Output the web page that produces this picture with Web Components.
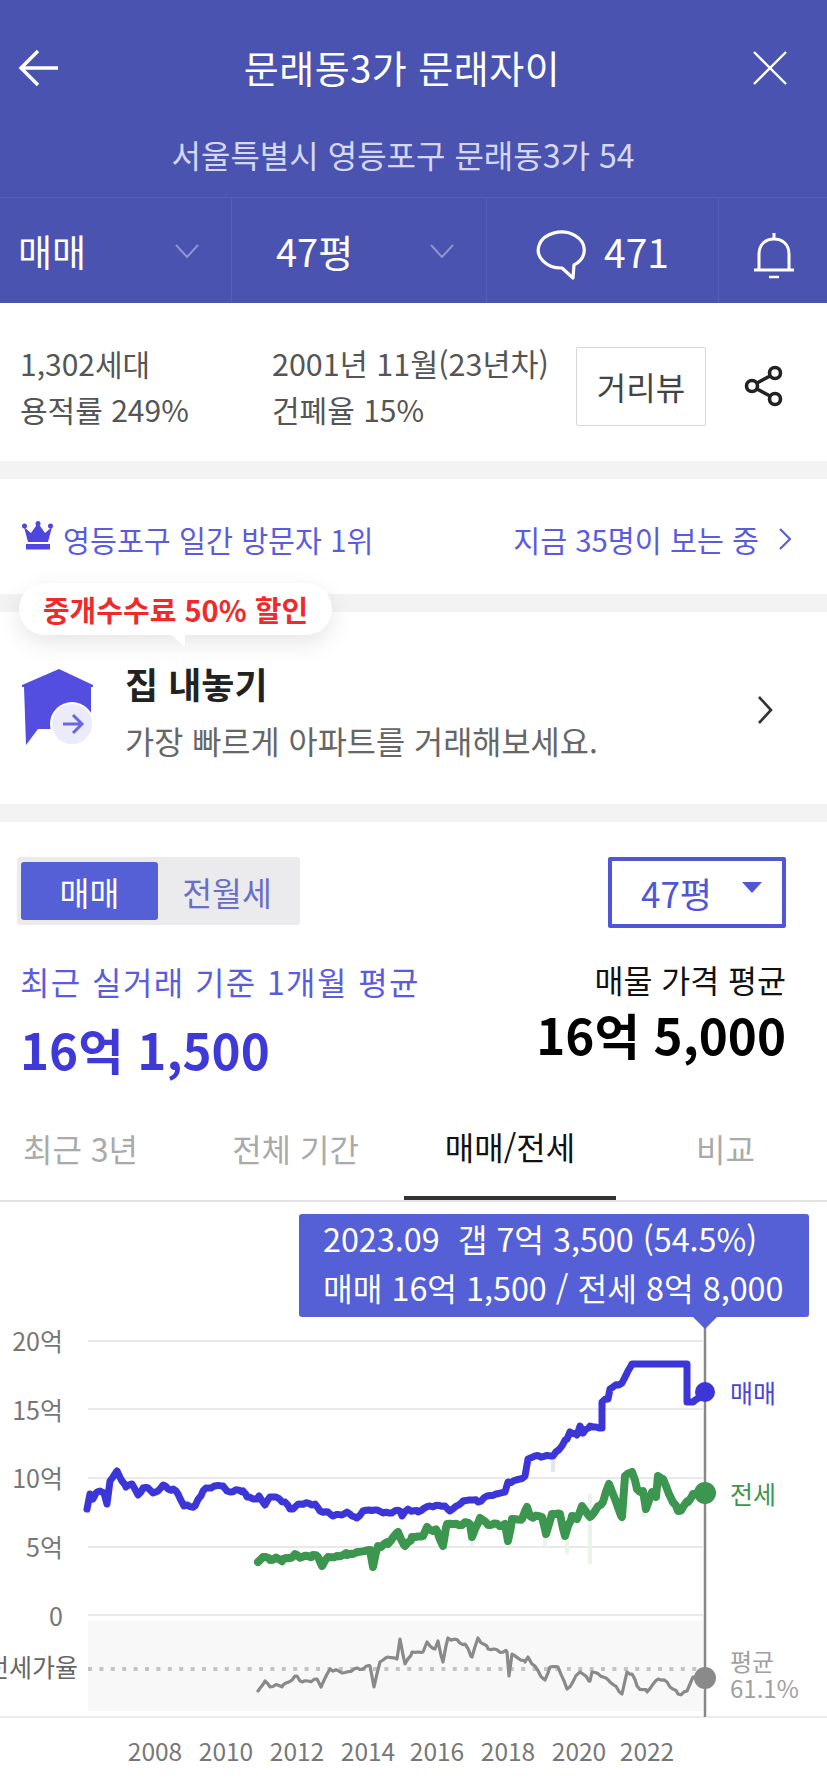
<!DOCTYPE html>
<html lang="ko">
<head>
<meta charset="utf-8">
<title>문래동3가 문래자이</title>
<style>
  html, body { margin: 0; padding: 0; background: #fff; }
  body { width: 827px; height: 1785px; overflow: hidden; font-family: "Noto Sans CJK KR", "Noto Sans", sans-serif; }
  page-band { display: block; }
</style>
</head>
<body>
<apt-header>
  <span slot="title">문래동3가 문래자이</span>
  <span slot="address">서울특별시 영등포구 문래동3가 54</span>
</apt-header>
<apt-info></apt-info>
<page-band></page-band>
<visitor-row></visitor-row>
<page-band></page-band>
<sell-card></sell-card>
<page-band></page-band>
<price-panel></price-panel>
<range-tabs></range-tabs>
<price-chart></price-chart>

<script>
function register(name, html) {
    const tpl = document.createElement('template');
    tpl.innerHTML = html;
    customElements.define(name, class extends HTMLElement {
        constructor() {
            super();
            this.attachShadow({ mode: 'open' });
            this.shadowRoot.appendChild(tpl.content.cloneNode(true));
        }
    });
}

register('page-band', `
    <style>:host { display: block; height: 18px; background: #f3f3f3; }</style>
`);

register('apt-header', `
    <style>
        :host { display: block; height: 303px; background: #4b53b0; color: #fff; }
        .top { height: 136px; box-sizing: border-box; display: flex; align-items: center; justify-content: space-between; padding: 0 40px 0 18px; }
        .top svg { display: block; }
        .title { font-size: 38px; letter-spacing: 0.5px; padding: 0 9px 4px 0; }
        .addr { height: 40px; line-height: 36px; text-align: center; font-size: 32px; color: #d5d8f2; padding-right: 21px; }
        .bar { margin-top: 21px; height: 106px; display: grid; grid-template-columns: 231px 255px 232px 109px; border-top: 1px solid #565eb8; box-sizing: border-box; }
        .cell { display: flex; align-items: center; border-left: 1px solid #565eb8; font-size: 37px; position: relative; }
        .cell:first-child { border-left: 0; padding-left: 18px; }
        .pick { justify-content: space-between; padding-right: 32px; }
        .cell.size { padding-left: 44px; font-size: 38px; }
        .talk { padding-left: 48px; gap: 17px; font-size: 39px; }
        .talk svg { margin-top: 8px; }
        .bell { justify-content: center; padding: 10px 0 0 2px; }
    </style>
    <div class="top">
        <svg width="42" height="38" viewBox="0 0 42 38" fill="none" stroke="#fff" stroke-width="3.4"><path d="M40 19H3M20 2 3 19l17 17"/></svg>
        <div class="title"><slot name="title"></slot></div>
        <svg width="34" height="34" viewBox="0 0 34 34" fill="none" stroke="#fff" stroke-width="2.4"><path d="M1 1l32 32M33 1 1 33"/></svg>
    </div>
    <div class="addr"><slot name="address"></slot></div>
    <div class="bar">
        <div class="cell pick"><span>매매</span>
            <svg width="24" height="14" viewBox="0 0 24 14" fill="none" stroke="#8e94d0" stroke-width="2"><path d="M1 1l11 12L23 1"/></svg></div>
        <div class="cell pick size"><span>47평</span>
            <svg width="24" height="14" viewBox="0 0 24 14" fill="none" stroke="#8e94d0" stroke-width="2"><path d="M1 1l11 12L23 1"/></svg></div>
        <div class="cell talk">
            <svg width="52" height="50" viewBox="0 0 52 50" fill="none" stroke="#fff" stroke-width="3.2" stroke-linejoin="round"><path d="M39 35A23 18 0 1 0 27 38L38 48Z"/></svg>
            <span>471</span></div>
        <div class="cell bell">
            <svg width="42" height="48" viewBox="0 0 42 48" fill="none" stroke="#fff" stroke-width="3"><path d="M21 1v6M6 38V22C6 12 13 7 21 7s15 5 15 15v16M1 38h40"/><path d="M16 45h10" stroke-width="2.5"/></svg></div>
    </div>
`);

register('apt-info', `
    <style>
        :host { display: grid; height: 158px; box-sizing: border-box; grid-template-columns: 252px 304px 130px 1fr; align-items: center; padding: 8px 0 0 20px; color: #555; font-size: 30px; }
        .lines { line-height: 46px; white-space: nowrap; }
        .wide { font-size: 30.500px; }
        .btn { box-sizing: border-box; height: 79px; border: 1px solid #d8d8d8; border-radius: 2px; display: flex; align-items: center; justify-content: center; font-size: 32px; color: #444; }
        svg { margin-left: 38px; display: block; }
    </style>
    <div class="lines">1,302세대<br>용적률 249%</div>
    <div class="lines"><span class="wide">2001년 11월(23년차)</span><br>건폐율 15%</div>
    <div class="btn">거리뷰</div>
    <svg width="40" height="42" viewBox="0 0 40 42" fill="none" stroke="#222" stroke-width="3.6"><circle cx="8" cy="21" r="5.5"/><circle cx="31" cy="8" r="5.5"/><circle cx="31" cy="34" r="5.5"/><path d="M13 18l13-7M13 24l13 7"/></svg>
`);

register('visitor-row', `
    <style>
        :host { display: flex; height: 115px; box-sizing: border-box; align-items: center; justify-content: space-between; padding: 4px 36px 0 22px; color: #5a5ce0; font-size: 29.300px; white-space: nowrap; }
        span { display: flex; align-items: center; }
        .crown { margin: -6px 10px 0 0; }
        .more { margin-left: 20px; }
    </style>
    <span><svg class="crown" width="31" height="29" viewBox="0 0 31 29" fill="#4f46e0"><path d="M2 6l7 6 7-10 7 10 7-6-4 15H6z"/><circle cx="2.500" cy="5" r="2.500"/><circle cx="16" cy="2.500" r="2.500"/><circle cx="28.500" cy="5" r="2.500"/><rect x="4" y="23" width="24" height="5.500"/></svg>영등포구 일간 방문자 1위</span>
    <span>지금 35명이 보는 중<svg class="more" width="12" height="22" viewBox="0 0 12 22" fill="none" stroke="#5a5ce0" stroke-width="2.2"><path d="M1 1l10 10L1 21"/></svg></span>
`);

register('sell-card', `
    <style>
        :host { display: flex; height: 192px; box-sizing: border-box; align-items: center; padding: 4px 54px 0 21px; position: relative; }
        .bubble { position: absolute; left: 19px; top: -29px; width: 313px; height: 52px; border-radius: 26px; background: #fff; box-shadow: 0 8px 24px rgba(0,0,0,.10); display: flex; align-items: center; justify-content: center; color: #f02a2a; font-weight: 700; font-size: 29px; white-space: nowrap; }
        .bubble::after { content: ""; position: absolute; left: 150px; top: 50px; border-left: 16px solid transparent; border-top: 14px solid #fff; }
        .text { flex: 1; margin-left: 30px; }
        .name { font-size: 36px; font-weight: 700; color: #222; line-height: 56px; }
        .desc { font-size: 31.700px; color: #666; line-height: 50px; margin-top: 4px; white-space: nowrap; }
    </style>
    <div class="bubble">중개수수료 50% 할인</div>
    <svg width="74" height="80" viewBox="0 0 74 80" style="margin-top:-4px"><path fill="#544ee0" d="M38 1 72 17v2h-2v42H17L5 77 3 19H1v-2z"/><circle cx="51" cy="56" r="22" fill="#fff"/><circle cx="51" cy="56" r="20" fill="#ecebfb"/><path d="M42 56h19M52 47l9 9-9 9" fill="none" stroke="#6b66e6" stroke-width="3"/></svg>
    <div class="text"><div class="name">집 내놓기</div><div class="desc">가장 빠르게 아파트를 거래해보세요.</div></div>
    <svg width="16" height="28" viewBox="0 0 16 28" fill="none" stroke="#333" stroke-width="2.6"><path d="M2 1l12 13L2 27"/></svg>
`);

register('price-panel', `
    <style>
        :host { display: block; height: 290px; box-sizing: border-box; padding: 35px 41px 0 17px; }
        .row { display: flex; justify-content: space-between; align-items: flex-start; }
        .seg { box-sizing: border-box; width: 283px; height: 68px; background: #ebebee; border-radius: 3px; padding: 5px 4px; display: flex; font-size: 32.500px; color: #6a6ec8; }
        .seg div { flex: 1; display: flex; align-items: center; justify-content: center; }
        .seg .on { flex: 0 0 137px; background: #5560d6; color: #fff; border-radius: 3px; }
        .size { box-sizing: border-box; width: 178px; height: 71px; border: 4px solid #5056d6; border-radius: 2px; display: flex; align-items: center; padding-left: 29px; color: #5056d6; font-size: 35px; position: relative; }
        .size i { position: absolute; right: 20px; top: 21px; border: 10px solid transparent; border-top: 11px solid #5056d6; border-bottom: 0; }
        .vals { display: flex; justify-content: space-between; padding-left: 3px; margin-top: 31px; }
        .avg { color: #5a5ce0; font-size: 32px; letter-spacing: 1.4px; line-height: 44px; white-space: nowrap; }
        .big { font-size: 49.300px; font-weight: 700; line-height: 64px; margin-top: 14px; color: #3f39d8; white-space: nowrap; }
        .r { text-align: right; }
        .lab { color: #111; font-size: 31.500px; line-height: 40px; }
        .r .big { color: #000; margin-top: 3px; }
    </style>
    <div class="row">
        <div class="seg"><div class="on">매매</div><div>전월세</div></div>
        <div class="size">47평<i></i></div>
    </div>
    <div class="vals">
        <div><div class="avg">최근 실거래 기준 1개월 평균</div><div class="big">16억 1,500</div></div>
        <div class="r"><div class="lab">매물 가격 평균</div><div class="big">16억 5,000</div></div>
    </div>
`);

register('range-tabs', `
    <style>
        :host { display: block; height: 90px; box-sizing: border-box; border-bottom: 2px solid #e4e4e4; overflow: hidden; }
        .tabs { display: grid; grid-template-columns: repeat(4, 215px); margin-left: -27px; height: 88px; font-size: 32px; color: #aaa; }
        .tabs div { display: flex; align-items: center; justify-content: center; padding-bottom: 17px; box-sizing: border-box; }
        .tabs .on { color: #111; border-bottom: 4px solid #333; margin: 0 2px 0 1px; }
    </style>
    <div class="tabs"><div>최근 3년</div><div>전체 기간</div><div class="on">매매/전세</div><div>비교</div></div>
`);

// traced from the reference, x,y in page pixels
const blue = '87,1510 90,1495 93,1500 97,1493 100,1492 104,1494 107,1505 110,1482 117,1472 122,1482 126,1488 132,1485 138,1496 143,1489 148,1489 153,1494 158,1492 163,1486 168,1490 173,1490 178,1495 184,1507 195,1507 203,1492 208,1489 215,1487 223,1487 227,1492 243,1492 247,1498 257,1500 259,1497 265,1506 270,1498 276,1498 285,1503 290,1510 295,1508 300,1505 315,1505 320,1512 328,1513 333,1517 342,1516 347,1513 352,1517 357,1519 363,1512 377,1511 383,1514 400,1512 402,1517 408,1510 418,1513 430,1507 445,1507 450,1512 463,1502 473,1501 478,1503 487,1497 505,1493 508,1483 516,1481 525,1477 528,1460 535,1457 553,1457 567,1440 570,1433 577,1436 580,1427 583,1434 590,1427 602,1429 602,1403 608,1400 610,1390 622,1384 632,1365 687,1365 687,1403 693,1403 705,1393';
const green = '258,1563 263,1558 270,1561 283,1560 297,1556 302,1558 313,1556 318,1558 322,1567 328,1558 347,1556 358,1553 370,1551 373,1568 378,1547 388,1545 398,1533 405,1547 412,1538 423,1537 427,1528 437,1532 443,1547 447,1525 470,1525 472,1538 480,1519 488,1526 505,1525 508,1542 512,1520 522,1520 527,1508 530,1517 542,1518 546,1535 552,1515 560,1515 565,1537 572,1517 577,1520 582,1507 590,1518 595,1512 603,1503 609,1485 615,1500 622,1518 625,1477 632,1473 637,1490 643,1492 646,1510 652,1493 656,1498 658,1477 663,1480 670,1497 678,1512 688,1503 693,1495 705,1495';
const ratio = '258,1692 265,1682 270,1688 283,1686 297,1677 302,1683 317,1680 321,1688 330,1670 342,1674 370,1667 374,1688 380,1663 388,1658 397,1660 400,1640 405,1665 412,1653 423,1653 427,1643 435,1650 438,1642 443,1663 448,1639 465,1645 472,1658 478,1639 488,1650 507,1653 509,1677 512,1655 525,1663 528,1658 532,1665 545,1681 550,1668 558,1668 567,1690 580,1673 590,1682 592,1673 603,1678 610,1683 622,1695 627,1673 632,1675 637,1687 647,1693 658,1680 667,1683 678,1695 687,1692 693,1678 705,1679';

// adds the fine monthly wobble between the traced points
function wobble(points, amp) {
    const pts = points.split(' ').map(p => p.split(',').map(Number));
    const out = [];
    pts.forEach((p, i) => {
        out.push(p.join(','));
        const next = pts[i + 1];
        if (!next) return;
        const dx = next[0] - p[0], dy = next[1] - p[1];
        if (dx > 40 && dy === 0) return;
        for (let x = 3; x < dx; x += 3) {
            const n = Math.sin((p[0] + x) * 1.7) + Math.sin((p[0] + x) * 0.63);
            out.push((p[0] + x) + ',' + (p[1] + dy * x / dx + n * amp).toFixed(1));
        }
    });
    return out.join(' ');
}

const grid = [1342, 1410, 1479, 1548, 1616];
const yLabels = [['20억', 1341], ['15억', 1410], ['10억', 1478], ['5억', 1547], ['0', 1616]];
const years = [[2008, 155], [2010, 226], [2012, 297], [2014, 368], [2016, 437], [2018, 508], [2020, 579], [2022, 647]];
const paleGreen = [[545, 1525, 1548], [567, 1530, 1555], [590, 1495, 1565], [643, 1495, 1518], [472, 1530, 1548]];

register('price-chart', `
    <style>
        :host { display: block; height: 582px; position: relative; }
        svg { display: block; }
        text { font-family: "Noto Sans CJK KR", "Noto Sans", sans-serif; dominant-baseline: central; }
        polyline { fill: none; stroke-linejoin: round; stroke-linecap: round; filter: blur(0.5px); }
        .tip { position: absolute; left: 299px; top: 12px; width: 510px; height: 103px; box-sizing: border-box; background: #5560d6; border-radius: 3px; color: #fff; font-size: 32.300px; line-height: 48.500px; padding-left: 24px; white-space: nowrap; }
        .tip::after { content: ""; position: absolute; left: 394px; top: 103px; border: 12px solid transparent; border-top: 12px solid #5560d6; border-bottom: 0; }
        .avg { position: absolute; left: 730px; top: 445px; font-size: 24px; line-height: 27px; color: #a0a0a0; }
    </style>
    <svg width="827" height="582" viewBox="0 1203 827 582">
        <rect x="88" y="1622" width="615" height="90" fill="#f8f8f8"/>
        ${grid.map(y => `<line x1="88" x2="703" y1="${y}" y2="${y}" stroke="#e9e9e9" stroke-width="2"/>`).join('')}
        <line x1="0" x2="827" y1="1718" y2="1718" stroke="#ececec" stroke-width="2"/>
        <line x1="88" x2="703" y1="1670" y2="1670" stroke="#c4c4c4" stroke-width="4" stroke-dasharray="4 7.400"/>
        ${yLabels.map(l => `<text x="63" y="${l[1]}" text-anchor="end" font-size="25" fill="#777">${l[0]}</text>`).join('')}
        <text x="78" y="1667" text-anchor="end" font-size="25" fill="#666">전세가율</text>
        ${years.map(l => `<text x="${l[1]}" y="1751" text-anchor="middle" font-size="24.500" fill="#777">${l[0]}</text>`).join('')}
        ${paleGreen.map(s => `<line x1="${s[0]}" x2="${s[0]}" y1="${s[1]}" y2="${s[2]}" stroke="#eaf4ec" stroke-width="4"/>`).join('')}
        <line x1="553" x2="553" y1="1457" y2="1473" stroke="#e4e4f8" stroke-width="4"/>
        <polyline points="${wobble(ratio, 0.9)}" stroke="#8a8a8a" stroke-width="3.200"/>
        <polyline points="${wobble(green, 1.1)}" stroke="#3d9650" stroke-width="8"/>
        <polyline points="${wobble(blue, 0.7)}" stroke="#3c36d8" stroke-width="7"/>
        <line x1="705" x2="705" y1="1326" y2="1718" stroke="#888" stroke-width="2.500"/>
        <circle cx="705" cy="1393" r="10" fill="#3c36d8"/>
        <circle cx="705" cy="1494" r="11" fill="#3d9650"/>
        <circle cx="705" cy="1679" r="11" fill="#8a8a8a"/>
        <text x="730" y="1393" font-size="25" fill="#4a44d8">매매</text>
        <text x="730" y="1494" font-size="25" fill="#3d9650">전세</text>
    </svg>
    <div class="avg">평균<br>61.1%</div>
    <div class="tip">2023.09&nbsp; 갭 7억 3,500 (54.5%)<br>매매 16억 1,500 / 전세 8억 8,000</div>
`);
</script>
</body>
</html>
